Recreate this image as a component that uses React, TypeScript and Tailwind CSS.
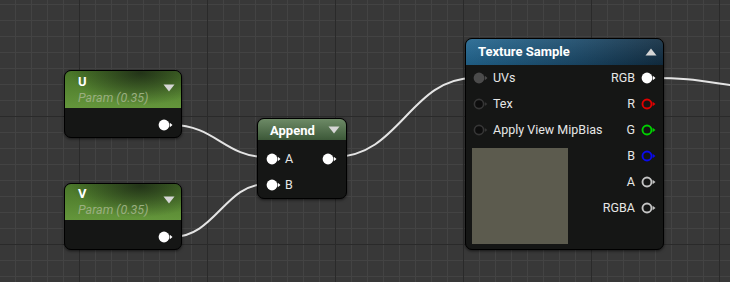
import React from "react";

type PinKind = "filled" | "ring" | "ghost" | "empty";

function Pin({ color, kind }: { color: string; kind: PinKind }) {
  if (kind === "filled") {
    return (
      <svg width="15" height="12" viewBox="0 0 15 12" className="shrink-0">
        <circle cx="6" cy="6" r="5.4" fill={color} />
        <polygon points="11.8,3.8 14.5,6 11.8,8.2" fill={color} />
      </svg>
    );
  }
  if (kind === "ghost") {
    return (
      <svg width="15" height="12" viewBox="0 0 15 12" className="shrink-0">
        <circle cx="6" cy="6" r="5.4" fill="#4b4b4b" />
        <polygon points="11.8,3.8 14.5,6 11.8,8.2" fill="#4b4b4b" />
      </svg>
    );
  }
  if (kind === "empty") {
    return (
      <svg width="15" height="12" viewBox="0 0 15 12" className="shrink-0">
        <circle cx="6" cy="6" r="4.6" fill="#0d0d0d" stroke="#363636" strokeWidth="1.6" />
        <polygon points="11.8,4 14.3,6 11.8,8" fill="#363636" />
      </svg>
    );
  }
  return (
    <svg width="15" height="12" viewBox="0 0 15 12" className="shrink-0">
      <circle cx="6" cy="6" r="4.5" fill="#141514" stroke={color} strokeWidth="1.9" />
      <polygon points="11.6,3.8 14.5,6 11.6,8.2" fill={color} />
    </svg>
  );
}

function DownTri() {
  return (
    <svg width="12" height="8" viewBox="0 0 12 8" className="shrink-0">
      <polygon points="0.5,0.5 11.5,0.5 6,7.5" fill="#d6d6d6" />
    </svg>
  );
}

function UpTri() {
  return (
    <svg width="12" height="8" viewBox="0 0 12 8" className="shrink-0">
      <polygon points="0.5,7.5 11.5,7.5 6,0.5" fill="#d6d6d6" />
    </svg>
  );
}

function ParamNode({ name, top, headerH }: { name: string; top: string; headerH: string }) {
  return (
    <div
      className={`absolute left-[64px] ${top} w-[118px] flex flex-col rounded-[7px] border border-black bg-[#151615] overflow-hidden shadow-[0_1px_3px_rgba(0,0,0,0.6)]`}
    >
      <div
        className={`${headerH} flex items-center justify-between pl-[13px] pr-[6px] bg-[radial-gradient(ellipse_at_65%_5%,rgba(25,35,20,0.8)_0%,rgba(25,35,20,0)_65%),linear-gradient(to_bottom,#487428,#64963b)]`}
      >
        <div className="flex flex-col">
          <span className="text-[13px] leading-[16px] font-bold text-white">{name}</span>
          <span className="text-[12.5px] leading-[16px] italic text-[#9aae80]">Param (0.35)</span>
        </div>
        <div className="mb-[4px]">
          <DownTri />
        </div>
      </div>
      <div className="h-[29px] flex items-center justify-end pr-[8px] pt-[5px]">
        <Pin color="#ffffff" kind="filled" />
      </div>
    </div>
  );
}

export default function App() {
  return (
    <div
      className="relative w-[730px] h-[282px] overflow-hidden bg-[#383838] [background-image:linear-gradient(to_right,#2a2a2a_1px,transparent_1px),linear-gradient(to_bottom,#2a2a2a_1px,transparent_1px),linear-gradient(to_right,#434343_1px,transparent_1px),linear-gradient(to_bottom,#434343_1px,transparent_1px)] [background-size:128px_128px,128px_128px,16px_16px,16px_16px] [background-position:79px_116px,79px_116px,15px_4px,15px_4px]"
      style={{ fontFamily: "Roboto, 'Liberation Sans', sans-serif" }}
    >
      <svg className="absolute inset-0" width="730" height="282" viewBox="0 0 730 282">
        <g fill="none" stroke="#e4e4e4" strokeWidth="2">
          <path d="M172 125 C 215 125, 225 157, 266 157" />
          <path d="M172 237 C 215 237, 225 184, 266 184" />
          <path d="M334 157 C 400 157, 410 78, 474 78" />
          <path d="M652 78 C 690 78, 700 81, 745 87" />
        </g>
      </svg>

      <ParamNode name="U" top="top-[70px]" headerH="h-[37px]" />
      <ParamNode name="V" top="top-[183px]" headerH="h-[36px]" />

      {/* Append */}
      <div className="absolute left-[257px] top-[118px] w-[90px] h-[81px] flex flex-col rounded-[7px] border border-black bg-[#151615] overflow-hidden shadow-[0_1px_3px_rgba(0,0,0,0.6)]">
        <div className="h-[21px] flex items-center justify-between pl-[12px] pr-[6px] bg-[linear-gradient(to_bottom,#6d8a66,#3c5838)]">
          <span className="pt-[3px] text-[13px] leading-[16px] font-bold text-white">Append</span>
          <div className="pt-[1px]">
            <DownTri />
          </div>
        </div>
        <div className="flex justify-between pt-[6px]">
          <div className="flex flex-col pl-[8px]">
            <div className="h-[26px] flex items-center gap-[4px]">
              <Pin color="#ffffff" kind="filled" />
              <span className="text-[12.5px] text-[#e6e6e6]">A</span>
            </div>
            <div className="h-[26px] flex items-center gap-[4px]">
              <Pin color="#ffffff" kind="filled" />
              <span className="text-[12.5px] text-[#e6e6e6]">B</span>
            </div>
          </div>
          <div className="flex flex-col pr-[9px]">
            <div className="h-[26px] flex items-center">
              <Pin color="#ffffff" kind="filled" />
            </div>
          </div>
        </div>
      </div>

      {/* Texture Sample */}
      <div className="absolute left-[465px] top-[38px] w-[199px] h-[212px] flex flex-col rounded-[7px] border border-black bg-[#151615] overflow-hidden shadow-[0_1px_3px_rgba(0,0,0,0.6)]">
        <div className="h-[26px] shrink-0 flex items-center justify-between pl-[12px] pr-[6px] bg-[linear-gradient(to_bottom,rgba(255,255,255,0.08),rgba(0,0,0,0.1)),linear-gradient(to_right,#226690,#1b4a6a_55%,#112d42)]">
          <span className="text-[13px] leading-[16px] font-bold text-white">Texture Sample</span>
          <UpTri />
        </div>
        <div className="flex justify-between">
          <div className="flex flex-col pl-[7px]">
            <div className="h-[26px] flex items-center gap-[5px]">
              <Pin color="#4b4b4b" kind="ghost" />
              <span className="text-[12.5px] text-[#e6e6e6]">UVs</span>
            </div>
            <div className="h-[26px] flex items-center gap-[5px]">
              <Pin color="#363636" kind="empty" />
              <span className="text-[12.5px] text-[#e6e6e6]">Tex</span>
            </div>
            <div className="h-[26px] flex items-center gap-[5px]">
              <Pin color="#363636" kind="empty" />
              <span className="text-[12.5px] text-[#e6e6e6]">Apply View MipBias</span>
            </div>
            <div className="mt-[5px] -ml-[1px] w-[96px] h-[96px] bg-[#5c5b4e]" />
          </div>
          <div className="flex flex-col items-end pr-[7px]">
            {[
              { l: "RGB", c: "#ffffff", k: "filled" as PinKind },
              { l: "R", c: "#e00000", k: "ring" as PinKind },
              { l: "G", c: "#00d000", k: "ring" as PinKind },
              { l: "B", c: "#0a0aee", k: "ring" as PinKind },
              { l: "A", c: "#c4c4c4", k: "ring" as PinKind },
              { l: "RGBA", c: "#c4c4c4", k: "ring" as PinKind },
            ].map((p) => (
              <div key={p.l} className="h-[26px] flex items-center gap-[6px]">
                <span className="text-[12.5px] text-[#e6e6e6]">{p.l}</span>
                <Pin color={p.c} kind={p.k} />
              </div>
            ))}
          </div>
        </div>
      </div>
    </div>
  );
}
